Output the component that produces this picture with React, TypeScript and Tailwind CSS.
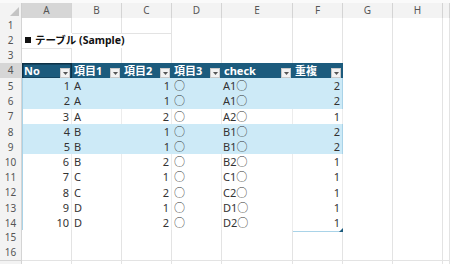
import React from "react";

const cols = ["A", "B", "C", "D", "E", "F", "G", "H", ""];
const heads = ["No", "項目1", "項目2", "項目3", "check", "重複"];

// No, 項目1, 項目2, check, 重複
const data: [number, string, number, string, number][] = [
  [1, "A", 1, "A1", 2],
  [2, "A", 1, "A1", 2],
  [3, "A", 2, "A2", 1],
  [4, "B", 1, "B1", 2],
  [5, "B", 1, "B1", 2],
  [6, "B", 2, "B2", 1],
  [7, "C", 1, "C1", 1],
  [8, "C", 2, "C2", 1],
  [9, "D", 1, "D1", 1],
  [10, "D", 2, "D2", 1],
];

const grid = "grid grid-cols-[22px_50px_50px_50px_50px_71px_50px_50px_50px_1fr]";
const font = { fontFamily: '"Noto Sans", "Noto Sans CJK JP", sans-serif' };

const RowNum = ({ n, active }: { n?: number; active?: boolean }) => (
  <div
    className={`flex items-center justify-center border-r border-b border-[#d4d4d4] text-[10px] text-[#555] ${
      active ? "bg-[#d6d6d6]" : "bg-[#f3f3f3]"
    }`}
  >
    {n}
  </div>
);

const Blank = ({ n = 1 }: { n?: number }) => (
  <>
    {Array.from({ length: n }).map((_, i) => (
      <div key={i} className="border-r border-b border-[#e3e3e3] bg-white" />
    ))}
  </>
);

const DropBtn = () => (
  <span className="mb-[1px] flex h-[10px] w-[10px] shrink-0 items-center justify-center border border-[#c9c9c9] bg-[#f2f2f2]">
    <svg width="5" height="3" viewBox="0 0 5 3">
      <polygon points="0,0 5,0 2.5,3" fill="#555" />
    </svg>
  </span>
);

export default function App() {
  return (
    <div className="h-[264px] w-[450px] overflow-hidden bg-white" style={font}>
      <div className="h-[3px] bg-[#fafafa]" />
      {/* column letters */}
      <div className={`${grid} h-[14.5px]`}>
        <div className="flex items-end justify-end border-r border-b border-[#cfcfcf] bg-[#f3f3f3] pr-[2px] pb-[2px]">
          <svg width="9" height="9" viewBox="0 0 9 9">
            <polygon points="9,0 9,9 0,9" fill="#c4c4c4" />
          </svg>
        </div>
        {cols.map((c, i) => (
          <div
            key={i}
            className={`flex items-center justify-center border-r border-b border-[#d4d4d4] text-[10px] text-[#555] ${
              i === 0 ? "bg-[#d6d6d6]" : "bg-[#f3f3f3]"
            }`}
          >
            {c}
          </div>
        ))}
      </div>

      {/* row 1 */}
      <div className={`${grid} h-[15.2px]`}>
        <RowNum n={1} />
        <Blank n={9} />
      </div>
      {/* row 2 title */}
      <div className={`${grid} h-[15.2px]`}>
        <RowNum n={2} />
        <div className="relative border-b border-[#e3e3e3] bg-white">
          <span className="absolute left-[3px] top-0 flex items-center gap-[4px] whitespace-nowrap text-[10.5px] font-bold leading-[15px] text-[#111]">
            <span className="inline-block h-[6px] w-[6px] bg-[#111]" />
            テーブル (Sample)
          </span>
        </div>
        <div className="border-b border-[#e3e3e3]" />
        <div className="border-r border-b border-[#e3e3e3]" />
        <Blank n={6} />
      </div>
      {/* row 3 */}
      <div className={`${grid} h-[15.2px]`}>
        <RowNum n={3} />
        <Blank n={9} />
      </div>
      {/* row 4 table header */}
      <div className={`${grid} h-[15.2px]`}>
        <RowNum n={4} active />
        {heads.map((h, i) => (
          <div
            key={i}
            className={`flex items-end justify-between bg-[#1c5b7d] pl-[2px] pr-[2px] text-[11px] font-bold leading-[14px] text-white ${
              i === 0 ? "shadow-[inset_0_0_0_1.5px_#0d3146]" : ""
            }`}
          >
            <span className="self-center">{h}</span>
            <DropBtn />
          </div>
        ))}
        <Blank n={3} />
      </div>
      {/* data rows */}
      {data.map((r, idx) => {
        const dup = r[4] === 2;
        const cell = `flex items-center border-b border-[#a9d3e8] text-[11px] text-[#333] ${
          dup ? "bg-[#cdeaf7]" : "bg-white border-r border-r-[#ececec]"
        }`;
        const last = idx === data.length - 1;
        return (
          <div key={idx} className={`${grid} h-[15.2px]`}>
            <RowNum n={idx + 5} />
            <div className={`${cell} justify-end pr-[2px] border-l border-l-[#a9d3e8]`}>{r[0]}</div>
            <div className={`${cell} pl-[2px]`}>{r[1]}</div>
            <div className={`${cell} justify-end pr-[2px]`}>{r[2]}</div>
            <div className={`${cell} pl-[2px]`}>○</div>
            <div className={`${cell} pl-[1px]`}>{r[3]}○</div>
            <div className={`${cell} relative justify-end pr-[2px] border-r border-r-[#a9d3e8]`}>
              {r[4]}
              {last && (
                <svg className="absolute bottom-[-1px] right-[-1px]" width="4" height="4" viewBox="0 0 4 4">
                  <polygon points="4,0 4,4 0,4" fill="#1c5b7d" />
                </svg>
              )}
            </div>
            <Blank n={3} />
          </div>
        );
      })}
      {/* rows 15-17 */}
      {[15, 16].map((n) => (
        <div key={n} className={`${grid} h-[15.2px]`}>
          <RowNum n={n} />
          <Blank n={9} />
        </div>
      ))}
      <div className={`${grid} h-[15.2px]`}>
        <RowNum />
        <Blank n={9} />
      </div>
    </div>
  );
}
